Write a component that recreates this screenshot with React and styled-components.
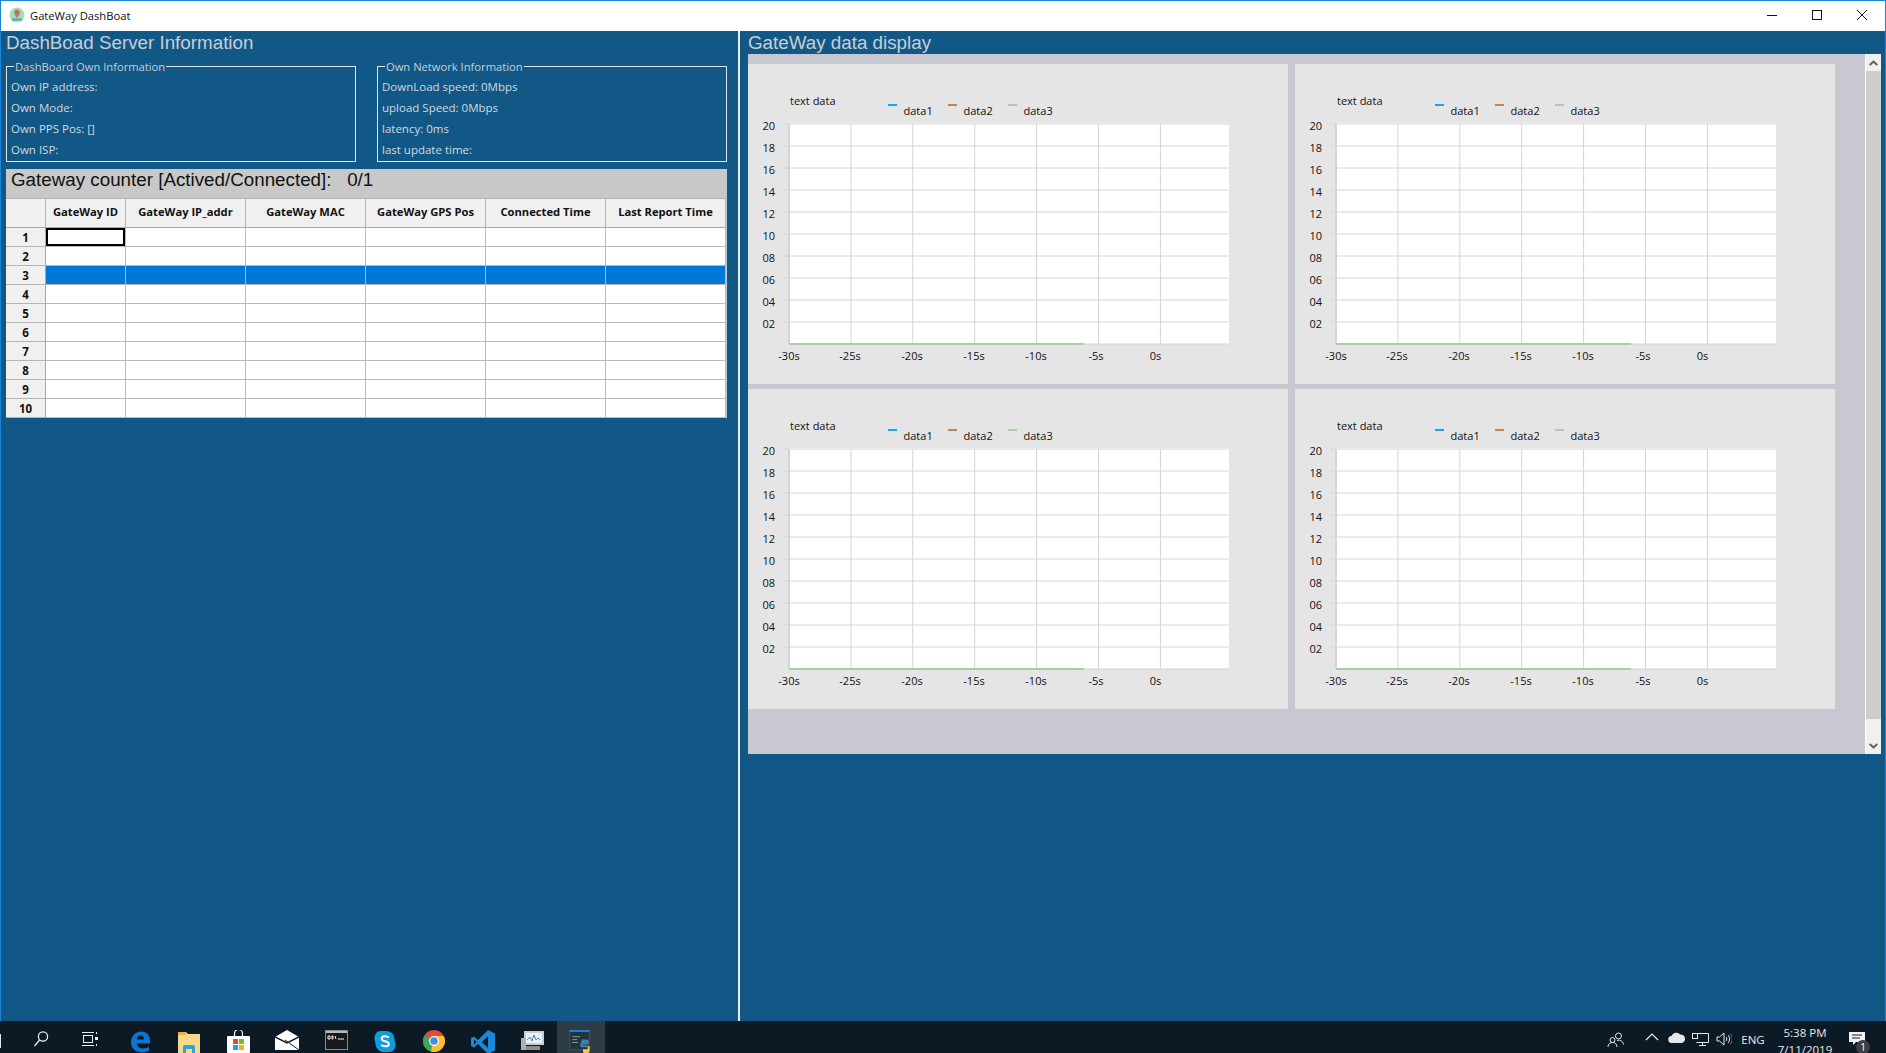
import React from 'react'
import styled, { createGlobalStyle } from 'styled-components'

const Global = createGlobalStyle`
    html, body {
        margin: 0;
        padding: 0;
        height: 100%;
        overflow: hidden;
        background: #125887;
    }
    #root {
        height: 100%;
    }
`

const Screen = styled.div`
    width: 1886px;
    height: 1053px;
    display: flex;
    flex-flow: column nowrap;
    overflow: hidden;
    font-family: "Open Sans", "Noto Sans", sans-serif;
`

const Win = styled.div`
    flex: 1;
    min-height: 0;
    display: flex;
    flex-flow: column nowrap;
    border: 1px solid #1a84d8;
    border-bottom: none;
`

const TitleBar = styled.div`
    height: 30px;
    box-sizing: border-box;
    padding: 0 1px 2px 8px;
    background: #fff;
    display: flex;
    flex-flow: row nowrap;
    align-items: center;
`

const TitleText = styled.span`
    font-size: 11.2px;
    color: #111;
    flex: 1;
    margin-left: 5px;
`

const WinBtn = styled.div`
    width: 45px;
    height: 28px;
    display: flex;
    align-items: center;
    justify-content: center;
`

const Body = styled.div`
    flex: 1;
    min-height: 0;
    display: flex;
    flex-flow: row nowrap;
    background: #125887;
`

const LeftPane = styled.section`
    width: 740px;
    padding: 0 11px 0 5px;
    box-sizing: border-box;
    border-right: 2px solid #e8eef2;
`

const RightPane = styled.section`
    flex: 1;
    padding-left: 8px;
    padding-right: 4px;
`

const PaneTitle = styled.h1`
    margin: 0;
    height: 23px;
    line-height: 24px;
    font-family: "Liberation Sans", Arial, sans-serif;
    font-weight: 400;
    font-size: 18.8px;
    color: #c9ced2;
`

const Groups = styled.div`
    display: flex;
    flex-flow: row nowrap;
    justify-content: space-between;
    margin-top: 7px;
`

const Group = styled.fieldset`
    margin: 0;
    width: 350px;
    height: 101px;
    box-sizing: border-box;
    border: 1px solid #dfe5e9;
    padding: 0 4px;
    display: flex;
    flex-flow: column nowrap;
`

const GroupLegend = styled.legend`
    font-size: 11.2px;
    color: #c9ced2;
    padding: 0 1px;
    margin-left: 3px;
    line-height: 1;
`

const GroupRow = styled.div`
    height: 21px;
    line-height: 21px;
    font-size: 11.5px;
    color: #d4d8dc;
    position: relative;
    top: 4px;
`

const Counter = styled.div`
    margin-top: 7px;
    background: #c8c8c8;
`

const CounterTitle = styled.div`
    height: 29px;
    line-height: 22px;
    padding-left: 5px;
    font-family: "Liberation Sans", Arial, sans-serif;
    font-size: 18.8px;
    color: #111;
    white-space: pre;
`

const Table = styled.table`
    border-collapse: separate;
    border-spacing: 0;
    table-layout: fixed;
    width: 720px;
    background: #fff;
`

const HeadCell = styled.th`
    height: 30px;
    padding: 0 0 3px;
    box-sizing: border-box;
    background: #f0f0f0;
    border-right: 1px solid #b4b4b4;
    border-bottom: 1px solid #a8a8a8;
    border-top: 1px solid #b4b4b4;
    font-size: 11.2px;
    font-weight: 700;
    color: #111;
    width: ${props => props.$w}px;
`

const RowHead = styled.th`
    height: 19px;
    padding: 0;
    box-sizing: border-box;
    background: #f0f0f0;
    border-right: 1px solid #a8a8a8;
    border-bottom: 1px solid #b4b4b4;
    font-size: 11.5px;
    font-weight: 700;
    color: #111;
`

const Cell = styled.td`
    height: 19px;
    padding: 0;
    box-sizing: border-box;
    background: ${props => props.$active ? '#0078d7' : '#fff'};
    border-right: 1px solid #b9b9b9;
    border-bottom: 1px solid #b9b9b9;
    ${props => props.$focus ? 'box-shadow: inset 0 0 0 2px #000;' : ''}
`

const ScrollArea = styled.div`
    width: 1133px;
    height: 700px;
    background: #c8c8d2;
    display: flex;
    flex-flow: row nowrap;
`

const ChartGrid = styled.div`
    flex: 1;
    padding-top: 10px;
    display: grid;
    grid-template-columns: 540px 540px;
    grid-template-rows: 320px 320px;
    column-gap: 7px;
    row-gap: 5px;
`

const ChartCard = styled.div`
    background: #e5e5e5;
    width: 540px;
    height: 320px;
`

const ChartSvg = styled.svg`
    display: block;
    font-family: "Open Sans", "Noto Sans", sans-serif;
    font-size: 11px;
    fill: #111;
`

const ScrollBar = styled.div`
    width: 16px;
    margin-left: 1px;
    background: #f0f0f0;
    border-left: 1px solid #fff;
    box-sizing: border-box;
    display: flex;
    flex-flow: column nowrap;
`

const ScrollBtn = styled.div`
    height: 17px;
    display: flex;
    align-items: center;
    justify-content: center;
    ${props => props.$bottom ? 'margin-top: auto;' : ''}
`

const ScrollThumb = styled.div`
    height: 648px;
    background: #cdcdcd;
`

const Taskbar = styled.footer`
    height: 32px;
    flex: none;
    background: #0c1a26;
    display: flex;
    flex-flow: row nowrap;
    align-items: flex-start;
    overflow: hidden;
`

const StartMark = styled.div`
    width: 1px;
    height: 14px;
    margin-top: 13px;
    margin-right: 16px;
    background: #e6e6e6;
`

const TaskIcon = styled.div`
    width: ${props => props.$w}px;
    height: 32px;
    flex: none;
    display: flex;
    justify-content: center;
    padding-top: 9px;
    box-sizing: border-box;
    background: ${props => props.$active ? '#2e3c48' : 'transparent'};
`

const Tray = styled.div`
    margin-left: auto;
    margin-right: 12px;
    display: flex;
    flex-flow: row nowrap;
    align-items: flex-start;
    color: #e8e8e8;
`

const TrayIcon = styled.div`
    width: 24px;
    height: 32px;
    display: flex;
    justify-content: center;
    padding-top: 11px;
    box-sizing: border-box;
    margin-right: ${props => props.$gap || 0}px;
`

const TrayText = styled.div`
    font-size: 11.5px;
    line-height: 32px;
    height: 32px;
    padding-top: 3px;
    box-sizing: border-box;
    width: 34px;
    text-align: center;
`

const Clock = styled.div`
    font-size: 11.5px;
    width: 70px;
    text-align: center;
    line-height: 17px;
    margin-top: 3px;
`

const Notify = styled.div`
    width: 34px;
    height: 32px;
    padding-top: 11px;
    box-sizing: border-box;
    position: relative;
    display: flex;
    justify-content: center;
`

const Badge = styled.span`
    position: absolute;
    left: 16px;
    top: 19px;
    width: 14px;
    height: 14px;
    border-radius: 50%;
    background: #3c3f43;
    color: #fff;
    font-size: 10px;
    line-height: 14px;
    text-align: center;
`

const columns = [
    { name: '', w: 40 },
    { name: 'GateWay ID', w: 80 },
    { name: 'GateWay IP_addr', w: 120 },
    { name: 'GateWay MAC', w: 120 },
    { name: 'GateWay GPS Pos', w: 120 },
    { name: 'Connected Time', w: 120 },
    { name: 'Last Report Time', w: 120 },
]
const rows = [1, 2, 3, 4, 5, 6, 7, 8, 9, 10]

const yLabels = ['20', '18', '16', '14', '12', '10', '08', '06', '04', '02']
const xLabels = [
    { t: '-30s', x: 41 },
    { t: '-25s', x: 102 },
    { t: '-20s', x: 164 },
    { t: '-15s', x: 226 },
    { t: '-10s', x: 288 },
    { t: '-5s', x: 348 },
    { t: '0s', x: 407.5 },
]
const legend = [
    { t: 'data1', c: '#12a8f0', x: 140 },
    { t: 'data2', c: '#c9824c', x: 200 },
    { t: 'data3', c: '#a6cfa6', x: 260 },
]

function Chart(){
    // plot area relative to card
    const left = 41, right = 481, top = 60, bottom = 280
    return(
        <ChartSvg width="540" height="320">
            <rect x={left} y={top - 1} width={right - left} height={bottom - top + 1} fill="#fff" />
            {yLabels.map((t, i) => {
                const y = top + i * 22
                return (
                    <g key={t}>
                        <line x1={left - 5} x2={right} y1={y} y2={y} stroke="#d4d4d4" />
                        <text x={left - 14} y={y + 6} textAnchor="end">{t}</text>
                    </g>
                )
            })}
            {[1, 2, 3, 4, 5, 6].map(i => (
                <line key={i} x1={left + i * 61.9} x2={left + i * 61.9} y1={top} y2={bottom} stroke="#d4d4d4" />
            ))}
            <line x1={left} x2={left} y1={top} y2={bottom} stroke="#d4d4d4" strokeWidth="2" />
            <line x1={left} x2={right} y1={bottom} y2={bottom} stroke="#d4d4d4" />
            <line x1={left} x2={336} y1={bottom} y2={bottom} stroke="#a6cfa6" strokeWidth="2" />
            {xLabels.map(l => (
                <text key={l.t} x={l.x} y={296} textAnchor="middle">{l.t}</text>
            ))}
            <text x={42} y={41}>text data</text>
            {legend.map(l => (
                <g key={l.t}>
                    <rect x={l.x} y={40} width={9} height={2} fill={l.c} />
                    <text x={l.x + 15.5} y={51}>{l.t}</text>
                </g>
            ))}
        </ChartSvg>
    )
}

function AppIcon(){
    return(
        <svg width="16" height="16" viewBox="0 0 16 16">
            <circle cx="8" cy="8" r="7.5" fill="#9fe0b8" />
            <path d="M3.5 11.500h9l1 2h-11z" fill="#5a9ad0" />
            <path d="M8 2.500a3 3 0 0 1 3 3c0 2-3 5.500-3 5.500s-3-3.500-3-5.500a3 3 0 0 1 3-3z" fill="#e0704f" />
            <circle cx="8" cy="5.500" r="1.200" fill="#4a90d0" />
        </svg>
    )
}

const WinIcons = {
    min: <svg width="10" height="10"><line x1="0" x2="10" y1="5.500" y2="5.500" stroke="#111" /></svg>,
    max: <svg width="10" height="10"><rect x=".5" y=".5" width="9" height="9" fill="none" stroke="#111" /></svg>,
    close: <svg width="10" height="10"><path d="M0 0L10 10M10 0L0 10" stroke="#111" fill="none" /></svg>,
}

const taskIcons = [
    { w: 48, el: <svg width="16" height="18" viewBox="0 0 16 18" fill="none" stroke="#eee" strokeWidth="1.3"><circle cx="10" cy="6.500" r="4.600" /><path d="M6.600 10L1.500 16" /></svg> },
    { w: 50.5, el: <svg width="18" height="18" viewBox="0 0 18 18" fill="none" stroke="#eee"><rect x="2.500" y="5.500" width="9" height="7" /><path d="M1 2.500h12M1 15.500h12M15.500 2v2M15.500 14v2" /><rect x="14" y="7" width="3" height="3" fill="#eee" stroke="none" /></svg> },
    { w: 49, el: <svg width="21" height="23" viewBox="0 0 21 22"><path d="M1 12C1 5 6 1 11 1c6 0 9 4 9 10v2H7c0 3 3 5 6 5 3 0 5-1 6-2v4c-2 1-4 2-7 2-6 0-11-4-11-10zm6-3h7c0-2-1-4-3.500-4S7 7 7 9z" fill="#0f74d4" /></svg> },
    { w: 49, el: <svg width="22" height="23" viewBox="0 0 22 23"><path d="M0 2h8l2 2h12v19H0z" fill="#f5d98a" /><path d="M0 2h8v3H0z" fill="#e8b63e" /><path d="M5 23v-6a2 2 0 0 1 2-2h8a2 2 0 0 1 2 2v6h-3v-4H8v4z" fill="#2ba4d8" /></svg> },
    { w: 49, el: <svg width="23" height="24" viewBox="0 0 23 24"><path d="M7.500 6V3.500a4 4 0 0 1 8 0V6" fill="none" stroke="#fff" strokeWidth="1.200" /><rect x="0" y="6" width="23" height="17" rx="1" fill="#fff" /><rect x="6" y="9" width="5" height="5" fill="#e8482a" /><rect x="12" y="9" width="5" height="5" fill="#7cb82a" /><rect x="6" y="15" width="5" height="5" fill="#1aa3e8" /><rect x="12" y="15" width="5" height="5" fill="#f4b400" /></svg> },
    { w: 49, el: <svg width="24" height="20" viewBox="0 0 24 20"><path d="M0 7L12 0l12 7v13H0z" fill="#fff" /><path d="M0 7l12 6 12-6" fill="none" stroke="#0c1a26" strokeWidth="1.500" /><path d="M24 20L10 10" stroke="#0c1a26" strokeWidth="1" /></svg> },
    { w: 49, el: <svg width="23" height="20" viewBox="0 0 23 20"><rect x=".5" y=".5" width="22" height="19" fill="#17191c" stroke="#8a8a8a" /><rect x="1" y="1" width="21" height="2" fill="#b8b8b8" /><path d="M3 6h2v3H3zM7 6h1v3H7zM10 6l1 3M13 9h6" stroke="#eee" fill="none" /></svg> },
    { w: 49, el: <svg width="22" height="23" viewBox="0 0 22 24"><path d="M6 1h6c6 0 9 4 9 9 0 2 1 3 1 6 0 4-3 7-6 7h-5C5 23 1 19 1 14c0-2-1-3-1-5 0-5 3-8 6-8z" fill="#0f9de0" /><path d="M15 8c-1-1-2-1.500-4-1.500-2 0-3.500 1-3.500 2.500 0 3.500 7.500 2 7.500 5.500 0 1.500-1.500 2.500-3.500 2.500-2 0-3.500-.5-4.500-1.500" fill="none" stroke="#fff" strokeWidth="2" /></svg> },
    { w: 49, el: <svg width="22" height="22" viewBox="0 0 22 22"><circle cx="11" cy="11" r="11" fill="#dd4b3e" /><path d="M11 11L1.500 5.500A11 11 0 0 0 8 21.600z" fill="#3aa757" /><path d="M11 6h9.700A11 11 0 0 1 8 21.600z" fill="#fbc02d" /><circle cx="11" cy="11" r="5" fill="#fff" /><circle cx="11" cy="11" r="3.800" fill="#4a88ee" /></svg> },
    { w: 49, el: <svg width="24" height="24" viewBox="0 0 24 24"><path d="M17 0l7 3.500v17L17 24 7 14l-4 3.500L0 16V8l3-1.500L7 10z" fill="#1c88d8" /><path d="M17 6l-6 6 6 6z" fill="#0c1a26" /><path d="M3 9.500v5L5.500 12z" fill="#0c1a26" /></svg> },
    { w: 49, el: <svg width="23" height="21" viewBox="0 0 23 21"><rect x="3" y="1" width="20" height="14" fill="#c9ced2" /><rect x="5" y="3" width="16" height="10" fill="#eaf2f8" /><path d="M6 10l3-3 2 4 2-6 2 5 2-2 2 2" fill="none" stroke="#3c8dc8" /><rect x="0" y="8" width="5" height="12" fill="#b0b0b0" /><rect x="5" y="16" width="14" height="4" fill="#8d8d8d" /></svg> },
    { w: 48, active: true, el: <svg width="24" height="23" viewBox="0 0 24 24"><rect x=".5" y=".5" width="20" height="20" fill="#22323e" stroke="#3a5568" /><rect x="0" y="0" width="21" height="2" fill="#1a84d8" /><path d="M3 7h8M3 10h5M3 13h6" stroke="#7fae7f" /><path d="M13 10h5a2 2 0 0 1 2 2v3h-6v1h5v2h-6a2 2 0 0 1-2-2z" fill="#3f7fb5" /><path d="M15 24h4a2 2 0 0 0 2-2v-5h-2v3h-5v2a2 2 0 0 0 1 2z" fill="#f4c93c" /></svg> },
]

export default function App(){
    return(
        <Screen>
            <Global />
            <Win>
                <TitleBar>
                    <AppIcon />
                    <TitleText>GateWay DashBoat</TitleText>
                    <WinBtn>{WinIcons.min}</WinBtn>
                    <WinBtn>{WinIcons.max}</WinBtn>
                    <WinBtn>{WinIcons.close}</WinBtn>
                </TitleBar>
                <Body>
                    <LeftPane>
                        <PaneTitle>DashBoad Server Information</PaneTitle>
                        <Groups>
                            <Group>
                                <GroupLegend>DashBoard Own Information</GroupLegend>
                                <GroupRow>Own IP address:</GroupRow>
                                <GroupRow>Own Mode:</GroupRow>
                                <GroupRow>Own PPS Pos: []</GroupRow>
                                <GroupRow>Own ISP:</GroupRow>
                            </Group>
                            <Group>
                                <GroupLegend>Own Network Information</GroupLegend>
                                <GroupRow>DownLoad speed: 0Mbps</GroupRow>
                                <GroupRow>upload Speed: 0Mbps</GroupRow>
                                <GroupRow>latency: 0ms</GroupRow>
                                <GroupRow>last update time:</GroupRow>
                            </Group>
                        </Groups>
                        <Counter>
                            <CounterTitle>Gateway counter [Actived/Connected]:   0/1</CounterTitle>
                            <Table>
                                <thead>
                                    <tr>
                                        {columns.map(c => <HeadCell key={c.name} $w={c.w}>{c.name}</HeadCell>)}
                                    </tr>
                                </thead>
                                <tbody>
                                    {rows.map(r => (
                                        <tr key={r}>
                                            <RowHead>{r}</RowHead>
                                            {columns.slice(1).map((c, i) => (
                                                <Cell key={c.name} $active={r === 3} $focus={r === 1 && i === 0} />
                                            ))}
                                        </tr>
                                    ))}
                                </tbody>
                            </Table>
                        </Counter>
                    </LeftPane>
                    <RightPane>
                        <PaneTitle>GateWay data display</PaneTitle>
                        <ScrollArea>
                            <ChartGrid>
                                <ChartCard><Chart /></ChartCard>
                                <ChartCard><Chart /></ChartCard>
                                <ChartCard><Chart /></ChartCard>
                                <ChartCard><Chart /></ChartCard>
                            </ChartGrid>
                            <ScrollBar>
                                <ScrollBtn><svg width="9" height="6"><path d="M.7 5L4.500 1.500 8.300 5" fill="none" stroke="#606060" strokeWidth="2" /></svg></ScrollBtn>
                                <ScrollThumb />
                                <ScrollBtn $bottom><svg width="9" height="6"><path d="M.7 1L4.500 4.500 8.300 1" fill="none" stroke="#606060" strokeWidth="2" /></svg></ScrollBtn>
                            </ScrollBar>
                        </ScrollArea>
                    </RightPane>
                </Body>
            </Win>
            <Taskbar>
                <StartMark />
                {taskIcons.map((t, i) => (
                    <TaskIcon key={i} $w={t.w} $active={t.active}>{t.el}</TaskIcon>
                ))}
                <Tray>
                    <TrayIcon $gap={12}><svg width="18" height="16" viewBox="0 0 18 16" fill="none" stroke="#e8e8e8"><circle cx="11.500" cy="4" r="3" /><circle cx="5.500" cy="8" r="2.500" /><path d="M1 15c0-3 2-4.500 4.500-4.500S10 12 10 15M10 8.500c3-1 6 .5 6.500 4" /></svg></TrayIcon>
                    <TrayIcon><svg width="14" height="10" viewBox="0 0 14 10" fill="none" stroke="#e8e8e8" strokeWidth="1.200"><path d="M1 8l6-6 6 6" /></svg></TrayIcon>
                    <TrayIcon><svg width="17" height="11" viewBox="0 0 17 11"><path d="M4 11a3.500 3.500 0 0 1-.5-7A5 5 0 0 1 12 2.500 4 4 0 0 1 13.500 11z" fill="#e8e8e8" /></svg></TrayIcon>
                    <TrayIcon><svg width="17" height="15" viewBox="0 0 17 15" fill="none" stroke="#e8e8e8"><path d="M4.500 1.500h12v9h-12M10.500 10.500v3M7 13.500h7" /><rect x=".5" y="1.500" width="5" height="5" /></svg></TrayIcon>
                    <TrayIcon><svg width="16" height="14" viewBox="0 0 16 14" fill="none" stroke="#e8e8e8"><path d="M1 5h2.500L8 1v12L3.500 9H1z" /><path d="M10 5c1 1 1 3 0 4M12 3c2 2 2 6 0 8" /><path d="M14 1.500c3 3 3 8 0 11" stroke="#777" /></svg></TrayIcon>
                    <TrayText>ENG</TrayText>
                    <Clock>5:38 PM<br />7/11/2019</Clock>
                    <Notify>
                        <svg width="16" height="14" viewBox="0 0 16 14"><path d="M0 0h16v10H7l-3 3v-3H0z" fill="#f2f2f2" /><path d="M3 3h10M3 6h8" stroke="#0c1a26" /></svg>
                        <Badge>1</Badge>
                    </Notify>
                </Tray>
            </Taskbar>
        </Screen>
    )
}
